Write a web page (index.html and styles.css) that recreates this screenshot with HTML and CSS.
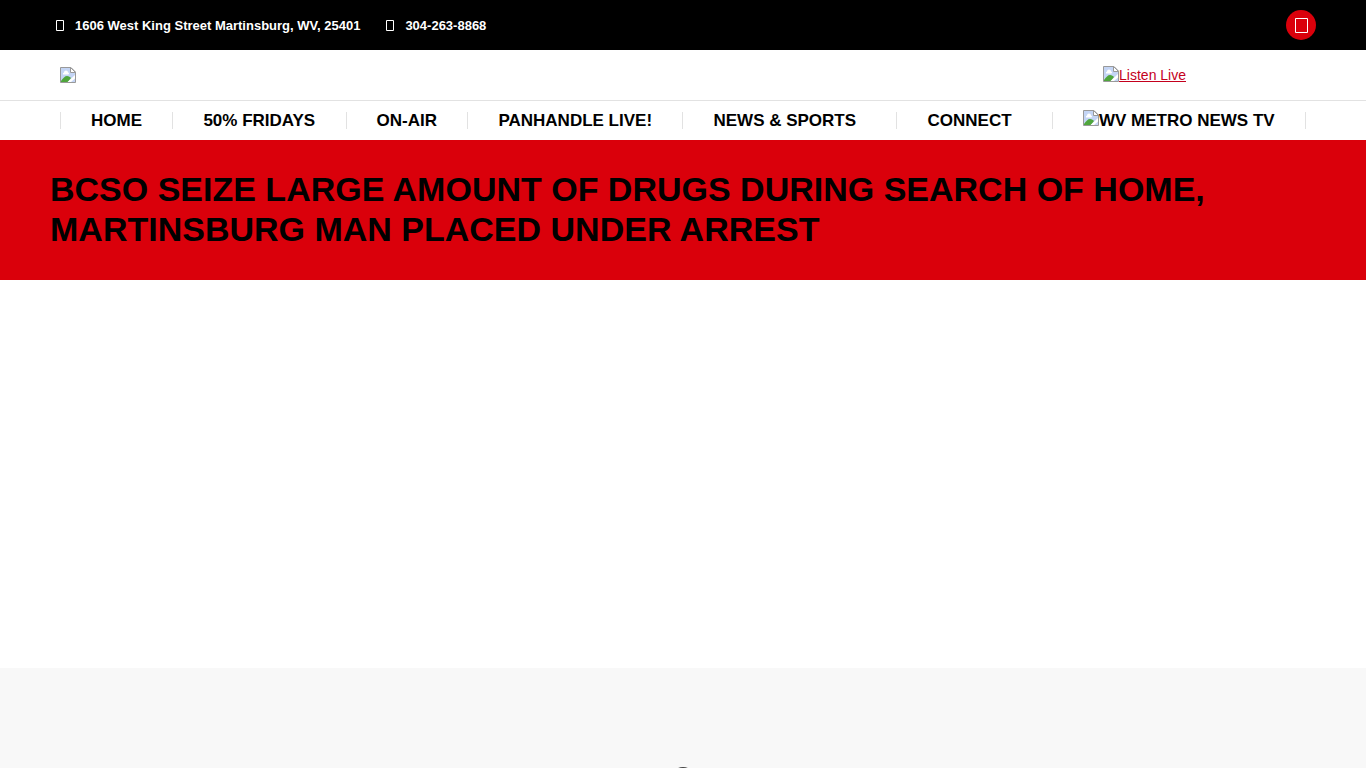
FILE: index.html
```html
<!DOCTYPE html>
<html lang="en">
<head>
    <meta charset="UTF-8">
    <meta name="viewport" content="width=device-width, initial-scale=1.0">
    <title>BCSO seize large amount of drugs during search of home</title>
    <link rel="stylesheet" href="styles.css">
</head>
<body>

    <!-- shared placeholder picture -->
    <svg class="defs" width="0" height="0" aria-hidden="true">
        <symbol id="picture" viewBox="0 0 16 16">
            <path d="M0.5 0.5H11L15.5 5V15.5H0.5Z" fill="#c4d5f5"/>
            <path d="M3 7.500a1.500 1.500 0 0 1 1-2a2 2 0 0 1 4 0a1 1 0 0 1 0 2Z" fill="#fff"/>
            <path d="M1 15V14C3 11 5 9 7 9C9 9 10 10 11 11L8 15Z" fill="#4fa63c"/>
            <path d="M0.500 15.500V0.500H11L15.500 5V15.500Z" fill="none" stroke="#999"/>
            <path d="M10.500 0.500V5.500H15.500Z" fill="#fff" stroke="#999"/>
            <path d="M15 8L7.500 15H11L15 11.500Z" fill="#fff"/>
        </symbol>
    </svg>

    <div class="top-bar">
        <div class="contact">
            <span class="contact-item">
                <svg class="contact-icon" viewBox="0 0 10 12" aria-hidden="true"><path d="M1.500 0.500H8.500V10.500H1.500Z"/></svg>
                1606 West King Street Martinsburg, WV, 25401
            </span>
            <span class="contact-item">
                <svg class="contact-icon" viewBox="0 0 10 12" aria-hidden="true"><path d="M1.500 0.500H8.500V10.500H1.500Z"/></svg>
                304-263-8868
            </span>
        </div>
        <a class="social" href="#" aria-label="Facebook">
            <svg viewBox="0 0 30 30" aria-hidden="true"><path d="M9.500 8.500H21.500V22.500H9.500Z"/></svg>
        </a>
    </div>

    <header class="branding">
        <a class="logo" href="#" aria-label="Home page"><svg class="picture" aria-hidden="true"><use href="#picture"/></svg></a>
        <a class="listen" href="#"><svg class="picture" aria-hidden="true"><use href="#picture"/></svg>Listen Live</a>
    </header>

    <nav class="main-nav">
        <ul>
            <li><a href="#">HOME</a></li>
            <li><a href="#">50% FRIDAYS</a></li>
            <li><a href="#">ON-AIR</a></li>
            <li><a href="#">PANHANDLE LIVE!</a></li>
            <li class="has-children"><a href="#">NEWS &amp; SPORTS</a></li>
            <li class="has-children"><a href="#">CONNECT</a></li>
            <li><a href="#"><svg class="picture" aria-hidden="true"><use href="#picture"/></svg>WV METRO NEWS TV</a></li>
        </ul>
    </nav>

    <div class="page-title">
        <h1>BCSO SEIZE LARGE AMOUNT OF DRUGS DURING SEARCH OF HOME, MARTINSBURG MAN PLACED UNDER ARREST</h1>
    </div>

    <main></main>

    <footer>
        <svg class="footer-mark" viewBox="0 0 24 24" aria-hidden="true"><circle cx="12" cy="12" r="11"/></svg>
    </footer>

</body>
</html>
```

FILE: styles.css
```css
* {
    box-sizing: border-box;
}
body {
    display: flex;
    flex-direction: column;
    height: 100vh;
    margin: 0;
    overflow: hidden;
    background-color: #fff;
    color: #000;
    font-family: Arial, "Liberation Sans", sans-serif;
    font-size: 14px;
}
.defs {
    position: absolute;
}
.picture {
    flex: none;
    width: 16px;
    height: 16px;
}

/* top bar */
.top-bar {
    display: flex;
    align-items: center;
    justify-content: space-between;
    padding: 10px 50px;
    background-color: #000;
}
.contact {
    display: flex;
    gap: 25px;
    padding-top: 2px;
    padding-left: 5px;
    color: #fff;
    font-size: 13px;
    font-weight: bold;
    line-height: 20px;
}
.contact-item {
    display: flex;
    align-items: center;
    gap: 10px;
}
.contact-icon {
    width: 10px;
    height: 12px;
    fill: none;
    stroke: #fff;
}
.social {
    width: 30px;
    height: 30px;
    border-radius: 50%;
    background-color: #da000b;
}
.social svg {
    display: block;
    fill: none;
    stroke: #fff;
}

/* logo row */
.branding {
    display: flex;
    align-items: center;
    justify-content: space-between;
    padding: 15px 180px 15px 60px;
    border-bottom: 1px solid #e2e2e2;
    line-height: 20px;
}
.logo,
.listen {
    display: flex;
    align-items: center;
}
.listen {
    color: #c4001d;
    text-decoration: underline;
}
.listen .picture {
    margin-bottom: 2px;
}

/* menu */
.main-nav {
    padding: 11px 60px;
}
.main-nav ul {
    display: flex;
    justify-content: space-between;
    margin: 0;
    padding: 0;
    border-right: 1px solid #e2e2e2;
    list-style: none;
}
.main-nav li {
    flex: 1 1 auto;
    padding: 0 30px;
    border-left: 1px solid #e2e2e2;
}
.main-nav .has-children {
    padding-right: 40px;
}
.main-nav a {
    display: flex;
    align-items: center;
    color: #000;
    font-size: 17px;
    font-weight: bold;
    line-height: 17px;
    text-decoration: none;
    white-space: nowrap;
}
.main-nav .picture {
    margin-top: -5px;
}

/* title banner */
.page-title {
    padding: 29px 50px 31px;
    background-color: #da000b;
}
.page-title h1 {
    margin: 0;
    font-size: 34px;
    line-height: 40px;
}

main {
    flex: 1;
}
footer {
    display: flex;
    justify-content: center;
    height: 100px;
    padding-top: 99px;
    overflow: hidden;
    background-color: #f8f8f8;
}
.footer-mark {
    flex: none;
    width: 24px;
    height: 24px;
    fill: none;
    stroke: #444;
    stroke-width: 2px;
}
```
